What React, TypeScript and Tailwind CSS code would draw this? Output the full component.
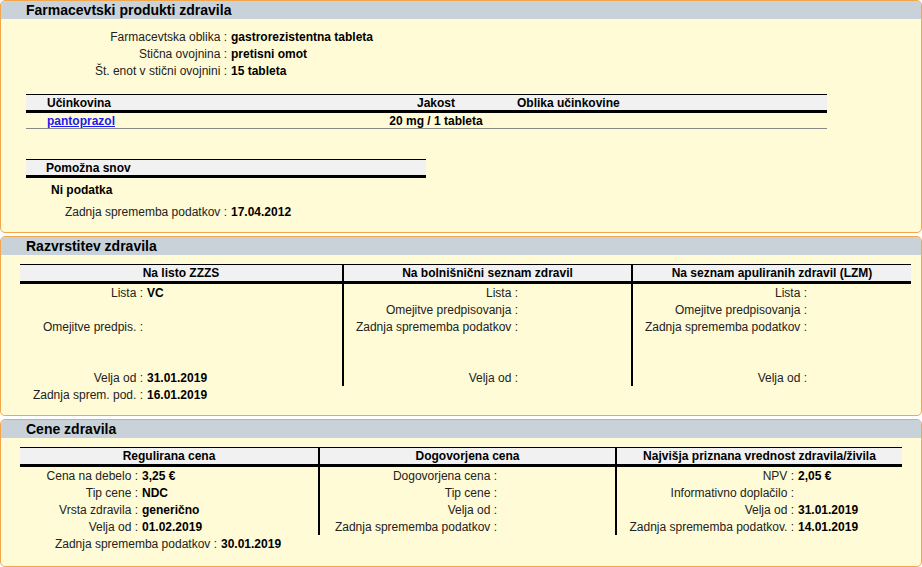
const F = { fontFamily: '"Liberation Sans", Arial, sans-serif' };

function Panel({ title, h, children }: { title: string; h: string; children: React.ReactNode }) {
  return (
    <div className={`rounded-[5px] border border-[#f2a74c] bg-[#fffbd6] overflow-hidden ${h}`}>
      <div className="h-[18px] bg-[#c8d2d8] pl-[25px] text-[14px] font-bold leading-[18px] text-black">{title}</div>
      {children}
    </div>
  );
}

function Row({ label, value, w }: { label: string; value?: string; w: string }) {
  return (
    <div className="flex h-[17px] items-center">
      <span className={`${w} shrink-0 text-right text-[#222]`}>{label ? `${label} :` : ''}</span>
      {value && <span className="pl-[4px] font-bold">{value}</span>}
    </div>
  );
}

function Col({ rows, w, cls }: { rows: [string, string?][]; w: string; cls: string }) {
  return (
    <div className={cls}>
      {rows.map(([l, v], i) => (
        <Row key={i} label={l} value={v} w={w} />
      ))}
    </div>
  );
}

export default function App() {
  return (
    <div style={F} className="flex h-[567px] w-[922px] flex-col gap-[3px] bg-white text-[12px] text-black">
      <Panel title="Farmacevtski produkti zdravila" h="h-[233px]">
        <div className="pt-[9px]">
          <Row label="Farmacevtska oblika" value="gastrorezistentna tableta" w="w-[226px]" />
          <Row label="Stična ovojnina" value="pretisni omot" w="w-[226px]" />
          <Row label="Št. enot v stični ovojnini" value="15 tableta" w="w-[226px]" />
        </div>
        <div className="ml-[25px] mt-[15px] w-[801px]">
          <div className="flex h-[16px] items-center border-t border-black bg-[#f1f1f1] font-bold">
            <span className="w-[355px] pl-[21px]">Učinkovina</span>
            <span className="w-[110px] text-center">Jakost</span>
            <span className="pl-[26px]">Oblika učinkovine</span>
          </div>
          <div className="h-[3px] bg-black" />
          <div className="flex h-[16px] items-center border-b border-[#888]">
            <a className="w-[355px] pl-[21px] font-bold text-[#1a1aee] underline">pantoprazol</a>
            <span className="w-[110px] text-center font-bold">20 mg / 1 tableta</span>
          </div>
        </div>
        <div className="ml-[25px] mt-[30px] w-[400px]">
          <div className="flex h-[16px] items-center border-t border-black bg-[#f1f1f1] pl-[20px] font-bold">Pomožna snov</div>
          <div className="h-[3px] bg-black" />
        </div>
        <div className="pl-[50px] pt-[3px] font-bold">Ni podatka</div>
        <div className="pt-[4px]">
          <Row label="Zadnja sprememba podatkov" value="17.04.2012" w="w-[226px]" />
        </div>
      </Panel>

      <Panel title="Razvrstitev zdravila" h="h-[180px]">
        <div className="ml-[19px] mt-[9px] w-[891px]">
          <div className="flex h-[17px] items-center border-t border-black bg-[#f1f1f1] font-bold">
            <span className="w-[322px] text-center">Na listo ZZZS</span>
            <span className="h-full w-[2px] bg-black" />
            <span className="w-[287px] text-center">Na bolnišnični seznam zdravil</span>
            <span className="h-full w-[2px] bg-black" />
            <span className="flex-1 text-center">Na seznam apuliranih zdravil (LZM)</span>
          </div>
          <div className="h-[3px] bg-black" />
          <div className="flex">
            <Col cls="w-[322px]" w="w-[123px]" rows={[["Lista", "VC"], [""], ["Omejitve predpis."], [""], [""], ["Velja od", "31.01.2019"]]} />
            <span className="w-[2px] bg-black" />
            <Col cls="w-[287px]" w="w-[174px]" rows={[["Lista"], ["Omejitve predpisovanja"], ["Zadnja sprememba podatkov"], [""], [""], ["Velja od"]]} />
            <span className="w-[2px] bg-black" />
            <Col cls="flex-1" w="w-[174px]" rows={[["Lista"], ["Omejitve predpisovanja"], ["Zadnja sprememba podatkov"], [""], [""], ["Velja od"]]} />
          </div>
          <Row label="Zadnja sprem. pod." value="16.01.2019" w="w-[123px]" />
        </div>
      </Panel>

      <Panel title="Cene zdravila" h="h-[148px]">
        <div className="ml-[19px] mt-[9px] w-[882px]">
          <div className="flex h-[17px] items-center border-t border-black bg-[#f1f1f1] font-bold">
            <span className="w-[298px] text-center">Regulirana cena</span>
            <span className="h-full w-[2px] bg-black" />
            <span className="w-[295px] text-center">Dogovorjena cena</span>
            <span className="h-full w-[2px] bg-black" />
            <span className="flex-1 text-center">Najvišja priznana vrednost zdravila/živila</span>
          </div>
          <div className="h-[3px] bg-black" />
          <div className="flex">
            <Col cls="w-[298px]" w="w-[118px]" rows={[["Cena na debelo", "3,25 €"], ["Tip cene", "NDC"], ["Vrsta zdravila", "generično"], ["Velja od", "01.02.2019"]]} />
            <span className="w-[2px] bg-black" />
            <Col cls="w-[295px]" w="w-[177px]" rows={[["Dogovorjena cena"], ["Tip cene"], ["Velja od"], ["Zadnja sprememba podatkov"]]} />
            <span className="w-[2px] bg-black" />
            <Col cls="flex-1" w="w-[177px]" rows={[["NPV", "2,05 €"], ["Informativno doplačilo"], ["Velja od", "31.01.2019"], ["Zadnja sprememba podatkov.", "14.01.2019"]]} />
          </div>
          <Row label="Zadnja sprememba podatkov" value="30.01.2019" w="w-[197px]" />
        </div>
      </Panel>
    </div>
  );
}
